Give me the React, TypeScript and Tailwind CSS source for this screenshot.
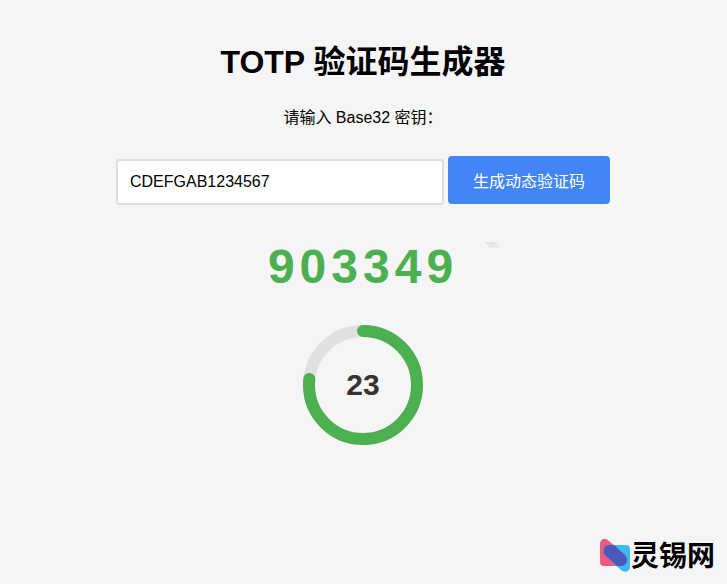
import { useState } from "react";

const PERIOD = 30;
const RADIUS = 54;
const CIRCUMFERENCE = 2 * Math.PI * RADIUS;

function CountdownRing({ seconds }: { seconds: number }) {
  const offset = CIRCUMFERENCE * (1 - seconds / PERIOD);

  return (
    <div className="relative w-[120px] h-[120px]">
      <svg viewBox="0 0 120 120" className="w-full h-full -rotate-90">
        <circle cx="60" cy="60" r={RADIUS} fill="none" stroke="#e0e0e0" strokeWidth="12" />
        <circle
          cx="60"
          cy="60"
          r={RADIUS}
          fill="none"
          stroke="#4caf50"
          strokeWidth="12"
          strokeLinecap="round"
          strokeDasharray={CIRCUMFERENCE}
          strokeDashoffset={offset}
        />
      </svg>
      <span className="absolute inset-0 flex items-center justify-center text-3xl font-bold text-[#333]">
        {seconds}
      </span>
    </div>
  );
}

function SiteLogo() {
  return (
    <div className="flex items-center gap-px">
      <svg viewBox="0 0 30 33" className="w-[30px] h-[33px]">
        <path d="M0 5C0 0 5 -2 9 2L25 16C29 20 27 27 21 27H4Q0 27 0 23Z" fill="#ee5a80" />
        <path d="M30 10Q30 6 26 6H9C4 6 2 12 5 16L21 31C24 34 30 33 30 28Z" fill="#3db9f8" />
        <path d="M9 6H14L25 16C29 20 27 27 21 27H17L5 16C2 12 4 6 9 6Z" fill="#4a5ab8" />
      </svg>
      <span className="pt-[3px] text-[28px] leading-8 font-bold text-black">灵锡网</span>
    </div>
  );
}

export default function App() {
  const [secret, setSecret] = useState("CDEFGAB1234567");
  const [code, setCode] = useState("903349");

  function generate() {
    if (!secret.trim()) return;
    setCode(String(Math.floor(Math.random() * 1000000)).padStart(6, "0"));
  }

  return (
    <div className="min-h-screen flex flex-col bg-[#f5f5f5] text-black font-['Liberation_Sans','Noto_Sans_CJK_SC',sans-serif]">
      <main className="flex-1 flex flex-col items-center pl-5 pr-[21px] pt-10">
        <h1 className="text-[32px] leading-11 font-bold">TOTP 验证码生成器</h1>
        <label htmlFor="secret" className="mt-[22px] text-base leading-6">
          请输入 Base32 密钥：
        </label>

        <div className="mt-[26px] flex flex-wrap items-baseline justify-center gap-1">
          <input
            id="secret"
            type="text"
            value={secret}
            onChange={(e) => setSecret(e.target.value)}
            className="w-[328px] h-[46px] px-3 text-base bg-white border-2 border-[#ddd] rounded"
          />
          <button
            type="button"
            onClick={generate}
            className="h-12 px-[25px] pt-1 text-base text-white bg-[#4285f4] rounded cursor-pointer"
          >
            生成动态验证码
          </button>
        </div>

        <div className="relative mt-[34px] text-5xl leading-14 font-bold tracking-[5px] text-[#4caf50]">
          {code}
          <svg viewBox="0 0 16 6" className="absolute left-full top-[3px] ml-[27px] w-4 h-[6px]">
            <defs>
              <linearGradient id="smudge" x1="0" y1="0" x2="0" y2="1">
                <stop offset="0" stopColor="#e0e0e0" />
                <stop offset="1" stopColor="#ededed" />
              </linearGradient>
            </defs>
            <path d="M0 0H9Q13 2 16 6H4Q2 2 0 0Z" fill="url(#smudge)" />
          </svg>
        </div>

        <div className="mt-[30px]">
          <CountdownRing seconds={23} />
        </div>
      </main>

      <footer className="flex justify-end pr-3 pb-[11px]">
        <SiteLogo />
      </footer>
    </div>
  );
}
